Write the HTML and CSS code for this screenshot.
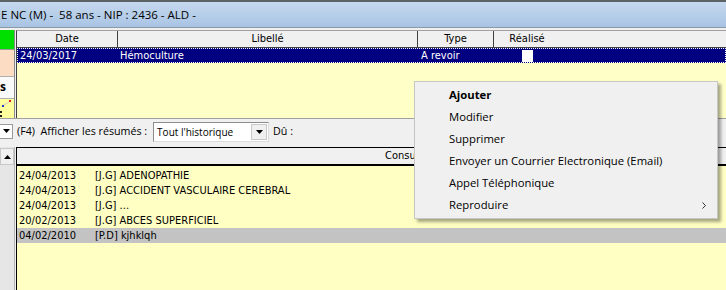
FILE: index.html
```html
<!DOCTYPE html>
<html lang="fr">
<head>
    <meta charset="UTF-8">
    <title>Dossier patient</title>
    <link rel="stylesheet" href="styles.css">
</head>
<body>
    <div class="window">
        <!-- Patient header -->
        <div class="titlebar">E NC (M) -  58 ans - NIP : 2436 - ALD -</div>

        <!-- Tasks grid -->
        <div class="top-section">
            <div class="side">
                <div class="side-green"></div>
                <div class="side-peach"></div>
                <div class="side-btn">s</div>
                <div class="side-yellow">
                    <svg width="13" height="19" viewBox="0 0 13 19">
                        <line x1="3" y1="7" x2="10" y2="2" stroke="#c8c8c8" stroke-width="1"/>
                        <rect x="2" y="6" width="2" height="2" fill="#1a3cc8"/>
                        <rect x="9" y="1" width="2" height="2" fill="#d02020"/>
                        <rect x="0" y="12" width="2" height="2" fill="#202020"/>
                        <rect x="0" y="16" width="2" height="2" fill="#202020"/>
                    </svg>
                </div>
            </div>
            <div class="grid grid-top">
                <div class="grid-head">
                    <div class="col col-date">Date</div>
                    <div class="col col-label">Libellé</div>
                    <div class="col col-type">Type</div>
                    <div class="col col-done">Réalisé</div>
                    <div class="col col-fill"></div>
                </div>
                <div class="grid-row selected">
                    <div class="cell cell-date">24/03/2017</div>
                    <div class="cell cell-label">Hémoculture</div>
                    <div class="cell cell-type">A revoir</div>
                    <div class="cell cell-done"><span class="check"></span></div>
                </div>
            </div>
        </div>

        <!-- Filter bar -->
        <div class="toolbar">
            <div class="drop-btn">
                <svg width="7" height="4" viewBox="0 0 7 4"><path d="M0 0h7L3.5 4z" fill="#000"/></svg>
            </div>
            <span class="tool-label">(F4)&nbsp; Afficher les résumés :</span>
            <div class="combo">
                <span class="combo-text">Tout l'historique</span>
                <span class="combo-arrow">
                    <svg width="7" height="4" viewBox="0 0 7 4"><path d="M0 0h7L3.5 4z" fill="#000"/></svg>
                </span>
            </div>
            <span class="tool-label">Dû :</span>
        </div>

        <!-- History list -->
        <div class="bottom-section">
            <div class="scroll">
                <div class="scroll-up">
                    <svg width="7" height="4" viewBox="0 0 7 4"><path d="M0 4h7L3.5 0z" fill="#000"/></svg>
                </div>
            </div>
            <div class="list">
                <div class="list-head"><span class="list-title">Consultations</span></div>
                <div class="list-body">
                    <div class="list-row"><span class="cell-date2">24/04/2013</span><span>[J.G] ADENOPATHIE</span></div>
                    <div class="list-row"><span class="cell-date2">24/04/2013</span><span>[J.G] ACCIDENT VASCULAIRE CEREBRAL</span></div>
                    <div class="list-row"><span class="cell-date2">24/04/2013</span><span>[J.G] ...</span></div>
                    <div class="list-row"><span class="cell-date2">20/02/2013</span><span>[J.G] ABCES SUPERFICIEL</span></div>
                    <div class="list-row current"><span class="cell-date2">04/02/2010</span><span>[P.D] kjhklqh</span></div>
                </div>
            </div>
        </div>

        <!-- Context menu -->
        <div class="context-menu">
            <div class="menu-item default">Ajouter</div>
            <div class="menu-item">Modifier</div>
            <div class="menu-item">Supprimer</div>
            <div class="menu-item">Envoyer un Courrier Electronique (Email)</div>
            <div class="menu-item">Appel Téléphonique</div>
            <div class="menu-item">Reproduire
                <svg class="submenu" width="4" height="7" viewBox="0 0 4 7"><path d="M0.5 0.5L3.5 3.5L0.5 6.5" fill="none" stroke="#333" stroke-width="1"/></svg>
            </div>
        </div>
    </div>
</body>
</html>
```

FILE: styles.css
```css
* {
    box-sizing: border-box;
}
body {
    margin: 0;
    width: 726px;
    height: 290px;
    overflow: hidden;
    background-color: #f0f0f0;
    font-family: "DejaVu Sans Condensed", "DejaVu Sans", sans-serif;
    font-size: 11px;
    color: #000;
}
.window {
    position: relative;
    height: 290px;
}

/* Patient header */
.titlebar {
    height: 28px;
    padding: 1px 0 0 1px;
    border-top: 2px solid #5c6166;
    border-bottom: 1px solid #8d9aa6;
    background: linear-gradient(#c6d9ee, #a8c4e4);
    font-family: "Open Sans", sans-serif;
    font-size: 11.5px;
    line-height: 24px;
    white-space: pre;
}

/* Tasks grid */
.top-section {
    display: flex;
    height: 88px;
    margin-top: 2px;
}
.side {
    width: 15px;
    flex: none;
    display: flex;
    flex-direction: column;
    border-right: 1px solid #8a8a8a;
}
.side-green {
    height: 20px;
    background-color: #00e000;
    border-bottom: 1px solid #9a9a9a;
}
.side-peach {
    height: 28px;
    background-color: #fddcc4;
    border-bottom: 1px solid #b0b0b0;
}
.side-btn {
    height: 22px;
    background-color: #fafafa;
    border-bottom: 1px solid #b0b0b0;
    font-family: "Open Sans", sans-serif;
    font-weight: bold;
    font-size: 12px;
    line-height: 19px;
}
.side-yellow {
    flex: 1;
    background-color: #ffff9e;
}
.side-yellow svg {
    display: block;
}
.grid-top {
    flex: 1;
    margin-left: 1px;
    border-left: 1px solid #404040;
    border-top: 1px solid #a0a0a0;
    background-color: #ffffc8;
}
.grid-head {
    display: flex;
    height: 17px;
    border-bottom: 1px solid #404040;
    background-color: #f0f0f0;
}
.col {
    flex: none;
    border-right: 1px solid #404040;
    text-align: center;
    line-height: 15px;
}
.col-date { width: 101px; }
.col-label { width: 300px; }
.col-type { width: 76px; }
.col-done { width: 66px; border-right: none; }
.col-fill { flex: 1; border-right: none; }

.grid-row {
    display: flex;
    height: 15px;
    line-height: 13px;
}
.selected {
    background-color: #000080;
    color: #fff;
    border: 1px dotted #fff;
}
.cell {
    flex: none;
    padding-left: 2px;
    white-space: nowrap;
}
.cell-date { width: 100px; }
.cell-label { width: 300px; }
.cell-type { width: 76px; padding-left: 3px; }
.cell-done {
    width: 66px;
    display: flex;
    justify-content: center;
    padding-left: 1px;
}
.check {
    width: 11px;
    height: 12px;
    margin-top: 1px;
    background-color: #fff;
}

/* Filter bar */
.toolbar {
    display: flex;
    align-items: center;
    height: 25px;
    border-top: 1px solid #a0a0a0;
    font-family: "Open Sans", sans-serif;
    font-size: 10.7px;
}
.drop-btn {
    width: 13px;
    height: 15px;
    display: flex;
    align-items: center;
    justify-content: center;
    background-color: #fff;
    border: 1px solid #9a9a9a;
    border-left: none;
}
.tool-label {
    margin-left: 4px;
    white-space: pre;
}
.combo {
    display: flex;
    align-items: center;
    width: 116px;
    height: 20px;
    margin-left: 6px;
    margin-top: 1px;
    background-color: #fff;
    border: 1px solid #8c8c8c;
    border-right-color: #dcdcdc;
    border-bottom-color: #dcdcdc;
}
.combo-text {
    flex: 1;
    padding-left: 3px;
    font-size: 10px;
}
.combo-arrow {
    width: 16px;
    height: 16px;
    margin-right: 1px;
    display: flex;
    align-items: center;
    justify-content: center;
    background-color: #f0f0f0;
    border: 1px solid #c8c8c8;
}

/* History list */
.bottom-section {
    display: flex;
    height: 146px;
    margin-top: 4px;
}
.scroll {
    width: 15px;
    flex: none;
    background-color: #e6e6e6;
    border-right: 1px solid #b4b4b4;
}
.scroll-up {
    height: 17px;
    margin-top: 1px;
    display: flex;
    align-items: center;
    justify-content: center;
    background-color: #f0f0f0;
    border: 1px solid #c8c8c8;
}
.list {
    flex: 1;
    margin-left: 1px;
    border-left: 1px solid #000;
    border-top: 1px solid #000;
    background-color: #ffffc4;
}
.list-head {
    height: 18px;
    padding-left: 368px;
    border-bottom: 2px solid #000;
    background-color: #f0f0f0;
    line-height: 15px;
}
.list-body {
    padding-top: 2px;
}
.list-row {
    display: flex;
    height: 15px;
    line-height: 15px;
    white-space: nowrap;
}
.cell-date2 {
    width: 78px;
    padding-left: 2px;
}
.current {
    background-color: #c3c3c3;
}

/* Context menu */
.context-menu {
    position: absolute;
    left: 414px;
    top: 81px;
    width: 304px;
    padding: 2px 0;
    background-color: #f0f0f0;
    border: 1px solid #c6c6c6;
    box-shadow: 3px 3px 3px rgba(0, 0, 0, 0.35);
    font-family: "Open Sans", sans-serif;
    font-size: 11.3px;
}
.menu-item {
    position: relative;
    height: 22px;
    padding-left: 34px;
    line-height: 22px;
}
.default {
    font-weight: bold;
}
.submenu {
    position: absolute;
    right: 11px;
    top: 8px;
}
```
